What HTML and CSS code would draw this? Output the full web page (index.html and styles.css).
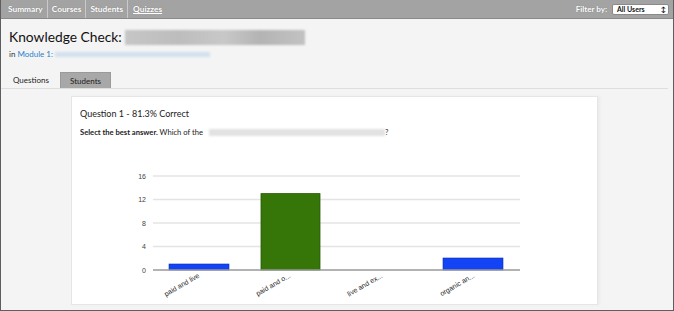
FILE: index.html
```html
<!DOCTYPE html>
<html>
<head>
<meta charset="utf-8">
<link rel="stylesheet" href="styles.css">
</head>
<body>
<div class="frame">
  <header class="topnav">
    <nav class="links">
      <a class="link">Summary</a>
      <a class="link">Courses</a>
      <a class="link">Students</a>
      <a class="link current">Quizzes</a>
    </nav>
    <div class="filter">
      <span class="filter-label">Filter by:</span>
      <div class="select"><span>All Users</span><span class="arrows">&#8597;</span></div>
    </div>
  </header>

  <section class="heading">
    <h1 class="title">Knowledge Check: <span class="blur blur-title"></span></h1>
    <div class="crumb">in <a class="mod">Module 1:</a> <span class="blur blur-link"></span></div>
  </section>

  <div class="tabs">
    <div class="tab active">Questions</div>
    <div class="tab">Students</div>
  </div>

  <div class="content">
    <div class="card">
      <div class="q-head">
        <div class="q-title">Question 1 - 81.3% Correct</div>
        <div class="q-text"><b>Select the best answer.</b> Which of the <span class="blur blur-q"></span>?</div>
      </div>
      <svg class="chart" width="525" height="155" viewBox="0 0 525 155">
        <g class="grid">
          <line x1="81" y1="27" x2="448" y2="27"/>
          <line x1="81" y1="50.5" x2="448" y2="50.5"/>
          <line x1="81" y1="74" x2="448" y2="74"/>
          <line x1="81" y1="97.5" x2="448" y2="97.5"/>
        </g>
        <g class="ylab">
          <text x="74" y="29.5">16</text>
          <text x="74" y="53">12</text>
          <text x="74" y="76.5">8</text>
          <text x="74" y="100">4</text>
          <text x="74" y="123.5">0</text>
        </g>
        <rect class="bar blue" x="97" y="115" width="60" height="6"/>
        <rect class="bar green" x="189" y="44.6" width="59" height="76.4"/>
        <rect class="bar blue" x="371" y="109" width="60" height="12"/>
        <line class="axis" x1="81" y1="121" x2="448" y2="121"/>
        <g class="xlab">
          <text transform="translate(128,128) rotate(-30)">paid and live</text>
          <text transform="translate(219,128) rotate(-30)">paid and o...</text>
          <text transform="translate(311,128) rotate(-30)">live and ex...</text>
          <text transform="translate(403,128) rotate(-30)">organic an...</text>
        </g>
      </svg>
    </div>
  </div>
</div>
</body>
</html>
```

FILE: styles.css
```css
* { box-sizing: border-box; }
html, body { margin: 0; padding: 0; }
body {
  font-family: Lato, "Open Sans", Arial, sans-serif;
  background: #fff;
}
.frame {
  width: 674px;
  height: 311px;
  border: 1px solid #5e5e5e;
  border-top: none;
  background: #f4f4f4;
  overflow: hidden;
}
.topnav {
  height: 19px;
  background: #a3a3a3;
  border-bottom: 1px solid #8a8a8a;
  display: flex;
  justify-content: space-between;
  align-items: stretch;
}
.links {
  display: flex;
  padding-left: 3px;
}
.link {
  color: #fff;
  font-weight: 700;
  font-size: 8.3px;
  line-height: 18px;
  padding: 0 4px 0 4px;
  border-right: 1px solid #c9c9c9;
  text-shadow: 0 0 1px rgba(0,0,0,0.3);
}
.link:last-child { border-right: none; padding-left: 5px; }
.link.current { text-decoration: underline; }
.filter {
  display: flex;
  align-items: center;
  gap: 5px;
  padding-right: 4px;
}
.filter-label {
  color: #fff;
  font-weight: 700;
  font-size: 8px;
  text-shadow: 0 0 1px rgba(0,0,0,0.3);
}
.select {
  width: 57px;
  height: 11px;
  background: #fff;
  border: 1px solid #8a8a8a;
  border-radius: 2px;
  display: flex;
  justify-content: space-between;
  align-items: center;
  padding: 0 2px 0 4px;
  font-size: 7px;
  font-weight: 700;
  color: #111;
}
.arrows { font-size: 7px; }

.heading { padding: 8px 0 0 8px; height: 53px; }
.title {
  margin: 0;
  font-weight: 400;
  font-size: 13.8px;
  color: #111;
  line-height: 20px;
  display: flex;
  align-items: center;
}
.blur {
  display: inline-block;
  filter: blur(1.2px);
}
.blur-title {
  width: 180px;
  height: 15px;
  margin-left: 3px;
  background: linear-gradient(90deg, #c6c6c6, #bdbdbd 30%, #c8c8c8 55%, #b4b4b4 75%, #c2c2c2);
}
.crumb {
  font-size: 8px;
  color: #333;
  margin-top: 2px;
  display: flex;
  align-items: center;
  gap: 2px;
}
.mod { color: #2a7fc9; }
.blur-link {
  width: 155px;
  height: 5px;
  background: #d4e2ef;
}

.tabs {
  display: flex;
  margin: 0 5px 0 0;
  padding-left: 3px;
  border-bottom: 1px solid #dedede;
  height: 17px;
}
.tab {
  font-size: 8px;
  color: #222;
  line-height: 16px;
  padding: 0 9px;
}
.tab.active {
  width: 56px;
  padding-left: 9px;
}
.tab:not(.active) {
  background: #a8a8a8;
  width: 51px;
  text-align: center;
  border: 1px solid #9a9a9a;
  border-bottom: none;
}

.content { padding: 7px 0 0 70px; }
.card {
  width: 527px;
  height: 209px;
  background: #fff;
  border: 1px solid #e6e6e6;
  box-shadow: 2px 0 3px rgba(0,0,0,0.04);
}
.q-head {
  height: 52px;
  padding: 11px 0 0 8px;
}
.q-title {
  font-size: 9px;
  color: #222;
  line-height: 12px;
}
.q-text {
  margin-top: 7px;
  font-size: 7.6px;
  color: #222;
  display: flex;
  align-items: center;
  white-space: pre;
}
.blur-q {
  width: 176px;
  height: 7px;
  margin-left: 4px;
  background: #e2e2e2;
}
.chart { display: block; }
.grid line { stroke: #e4e4e4; stroke-width: 1.5; }
.axis { stroke: #9a9a9a; stroke-width: 1.5; }
.ylab text {
  font-family: "Liberation Sans", Arial, sans-serif;
  font-size: 7px;
  fill: #444;
  text-anchor: end;
}
.xlab text {
  font-family: "Liberation Sans", Arial, sans-serif;
  font-size: 7px;
  fill: #222;
  text-anchor: end;
}
.bar.blue { fill: #1244f5; stroke: #0b2fb0; stroke-width: 0.6; }
.bar.green { fill: #367508; stroke: #275a05; stroke-width: 0.8; }
```
